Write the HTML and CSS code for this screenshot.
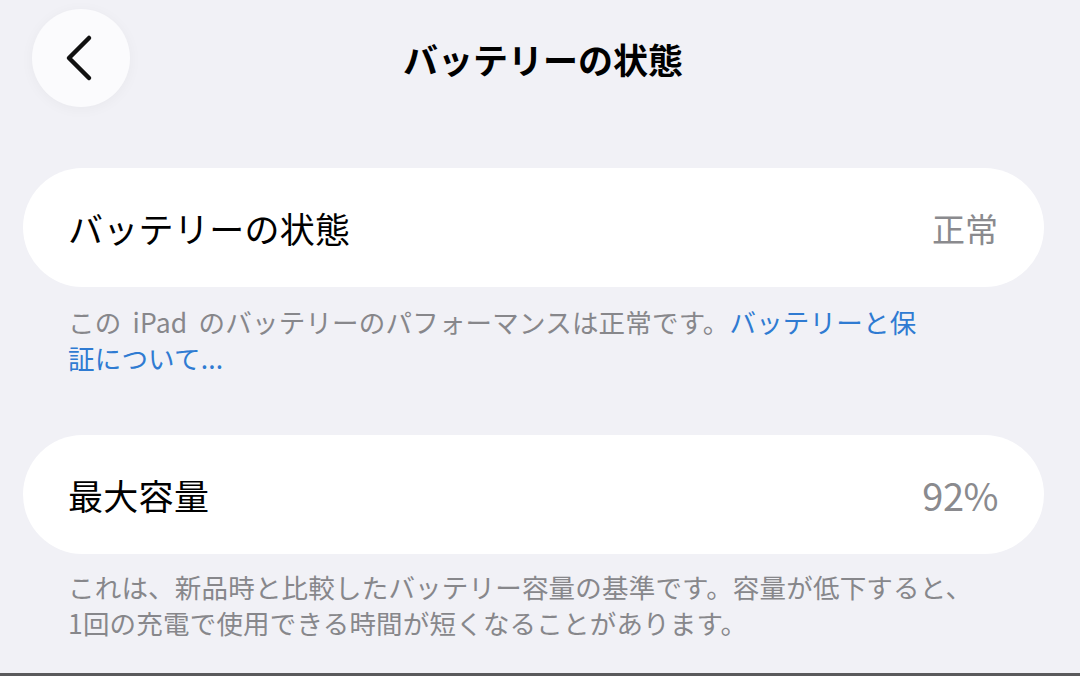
FILE: index.html
```html
<!DOCTYPE html>
<html lang="ja">
<head>
  <meta charset="UTF-8">
  <meta name="viewport" content="width=device-width, initial-scale=1.0">
  <title>バッテリーの状態</title>
  <link rel="stylesheet" href="styles.css">
</head>
<body>
  <div class="page">
    <header class="nav">
      <button class="back-button" aria-label="戻る">
        <svg width="98" height="98" viewBox="0 0 98 98">
          <path d="M57 29 L37 49 L57 69" fill="none" stroke="#111" stroke-width="4.5" stroke-linecap="round" stroke-linejoin="round"/>
        </svg>
      </button>
      <h1 class="nav-title">バッテリーの状態</h1>
      <div></div>
    </header>

    <section class="group">
      <div class="cell">
        <span class="cell-label">バッテリーの状態</span>
        <span class="cell-value">正常</span>
      </div>
      <p class="footnote spaced">この iPad のバッテリーのパフォーマンスは正常です。<a href="#" class="link">バッテリーと保<br>証について...</a></p>
    </section>

    <section class="group">
      <div class="cell">
        <span class="cell-label">最大容量</span>
        <span class="cell-value number">92%</span>
      </div>
      <p class="footnote">これは、新品時と比較したバッテリー容量の基準です。容量が低下すると、<br>1回の充電で使用できる時間が短くなることがあります。</p>
    </section>

    <div class="bottom-line"></div>
  </div>
</body>
</html>
```

FILE: styles.css
```css
body {
  margin: 0;
  padding: 0;
  background: #f1f1f6;
  font-family: "Noto Sans CJK JP", "Noto Sans", sans-serif;
  color: #000;
  overflow: hidden;
}

.page {
  height: 676px;
  display: flex;
  flex-direction: column;
}

.nav {
  display: grid;
  grid-template-columns: 1fr auto 1fr;
  align-items: center;
  height: 98px;
  padding: 9px 26px 9px 32px;
}

.back-button {
  width: 98px;
  height: 98px;
  padding: 0;
  border: none;
  border-radius: 50%;
  background: #fbfbfd;
  box-shadow: 0 2px 14px rgba(0, 0, 0, 0.04);
  display: flex;
  cursor: pointer;
}

.nav-title {
  margin: 0;
  font-size: 35px;
  font-weight: 700;
  line-height: 1;
}

.group {
  margin: 52px 36px 0 23px;
}

.group + .group {
  margin-top: 59px;
}

.cell {
  height: 119px;
  display: flex;
  align-items: center;
  justify-content: space-between;
  padding: 0 46px 0 45px;
  background: #ffffff;
  border-radius: 60px;
}

.cell-label {
  font-size: 35px;
  letter-spacing: 0.3px;
}

.cell-value {
  font-size: 33px;
  color: #8a8a8e;
}

.cell-value.number {
  font-size: 38px;
  letter-spacing: -0.5px;
}

.footnote {
  margin: 17px 0 0 45px;
  font-size: 26.5px;
  letter-spacing: 0.2px;
  line-height: 36px;
  color: #87878b;
}

.footnote.spaced {
  word-spacing: 5px;
}

.group + .group .footnote {
  margin-top: 15px;
}

.link {
  color: #2f7bd2;
  text-decoration: none;
}

.bottom-line {
  margin-top: auto;
  height: 3px;
  background: #5a5a5c;
}
```
